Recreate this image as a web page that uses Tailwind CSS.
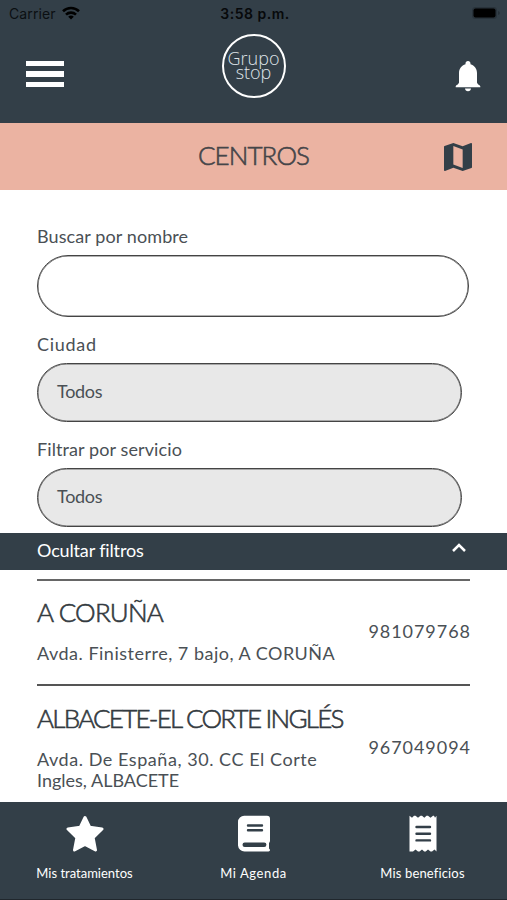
<!DOCTYPE html>
<html lang="es">
<head>
    <meta charset="UTF-8">
    <meta name="viewport" content="width=device-width, initial-scale=1.0">
    <title>Centros</title>
    <script src="https://cdn.jsdelivr.net/npm/@tailwindcss/browser@4"></script>
</head>
<body class="bg-white">
    <main class="flex flex-col h-[900px] w-[507px] overflow-hidden font-[Lato,sans-serif] text-[#4a5055] whitespace-nowrap">

        <header class="h-[123px] shrink-0 bg-[#333f48] flex flex-col">
            <!-- status bar -->
            <div class="h-7 grid grid-cols-3 items-center pl-[9px] pr-[6px] pb-px text-black font-[Inter,sans-serif] text-[14px]">
                <div class="flex items-center gap-[6px]">
                    <span class="text-[#0b0f12] tracking-[0.1px]">Carrier</span>
                    <svg class="w-[18px] h-[14px] mb-[2px]" viewBox="0 0 18 14" fill="none" stroke="#000" stroke-width="2.6">
                        <path d="M1 5.2C5.5.9 12.5.9 17 5.2" />
                        <path d="M4 8.6c2.8-2.7 7.2-2.7 10 0" />
                        <path d="M9 13.6 6.2 10.7c1.6-1.5 4-1.5 5.6 0z" fill="#000" stroke="none" />
                    </svg>
                </div>
                <span class="text-center font-semibold tracking-[0.5px] text-[#07090b]">3:58 p.m.</span>
                <svg class="w-[30px] h-[14px] justify-self-end mb-px" viewBox="0 0 30 14">
                    <rect x="1" y="1" width="25" height="12" rx="3.5" fill="#29333b" />
                    <rect x="2.5" y="2.5" width="22" height="9" rx="2" fill="#000" />
                    <path d="M27.5 5v4c1.3-.5 1.3-3.5 0-4z" fill="#1d252b" />
                </svg>
            </div>
            <div class="flex justify-between items-start pl-[26px] pr-[26px]">
                <div class="flex flex-col gap-[5px] w-[38px] mt-[33px]">
                    <span class="h-[5.3px] bg-white"></span>
                    <span class="h-[5.3px] bg-white"></span>
                    <span class="h-[5.3px] bg-white"></span>
                </div>
                <div class="w-16 h-16 ml-[-12px] mt-[6px] rounded-full border-2 border-white flex flex-col items-center justify-center text-[#dfe4e8] font-['Open_Sans',sans-serif] text-[18px] leading-[14px] pb-[3px]">
                    <span class="font-light">Grupo</span>
                    <span class="font-light">stop</span>
                </div>
                <svg class="w-[26px] h-[31px] mt-[33px]" viewBox="0 0 26 31" fill="#fff">
                    <path d="M13 0c-1.5 0-2.5 1-2.5 2.5v.8C6.500 4.5 4 8 4 12v9.500c0 1.500-3.300 3-3.300 3.700v1h24.600v-1c0-.7-3.300-2.200-3.300-3.700V12c0-4-2.500-7.500-6.500-8.700v-.8C15.500 1 14.500 0 13 0z" />
                    <path d="M10 27.500h6c0 1.500-1.300 2.700-3 2.700s-3-1.200-3-2.700z" />
                </svg>
            </div>
        </header>

        <div class="h-[67px] shrink-0 bg-[#ebb3a2] grid grid-cols-[1fr_auto_1fr] items-center">
            <h1 class="col-start-2 pb-[3px] text-[26px] leading-none tracking-[-0.9px] text-[#454549] font-light [-webkit-text-stroke:0.6px_#454549]">CENTROS</h1>
            <svg class="w-[28px] h-[28px] justify-self-end mr-[35px]" viewBox="3 3 18 18" fill="#333f48">
                <path d="M20.500 3l-.16.030L15 5.100 9 3 3.360 4.900c-.21.070-.36.250-.36.480V20.500c0 .28.220.5.500.5l.16-.03L9 18.900l6 2.100 5.640-1.900c.21-.07.36-.25.36-.48V3.500c0-.28-.22-.5-.5-.5zM15 19l-6-2.110V5l6 2.110V19z" />
            </svg>
        </div>

        <section class="h-[343px] shrink-0 pl-[37px] pt-[34px] text-[18px] leading-6">
            <label class="block tracking-[0.1px]">Buscar por nombre</label>
            <div class="mt-[7px] w-[432px] h-[62px] rounded-full border border-[#444] inset-shadow-[0_0_0_0.5px_#666]"></div>
            <label class="block mt-[15px] tracking-[0.7px]">Ciudad</label>
            <div class="mt-[7px] w-[425px] h-[59px] rounded-full border border-[#444] inset-shadow-[0_0_0_0.5px_#666] bg-[#e8e8e8] flex items-center pl-[19px] pb-[3px] tracking-[-0.3px]">Todos</div>
            <label class="block mt-[15px] tracking-[0.1px]">Filtrar por servicio</label>
            <div class="mt-[7px] w-[425px] h-[59px] rounded-full border border-[#444] inset-shadow-[0_0_0_0.5px_#666] bg-[#e8e8e8] flex items-center pl-[19px] pb-[3px] tracking-[-0.3px]">Todos</div>
        </section>

        <div class="h-[37px] shrink-0 bg-[#333f48] text-white text-[18px] flex items-center justify-between pl-[37px] pr-[41px]">
            <span class="pb-[3px] tracking-[-0.15px]">Ocultar filtros</span>
            <svg class="w-[14px] h-[9px] mb-[8px]" viewBox="0 0 14 9" fill="none" stroke="#fff" stroke-width="2.5">
                <path d="M1 8l6-6 6 6" />
            </svg>
        </div>

        <section class="h-[232px] shrink-0 px-[37px] pt-[9px]">
            <article class="h-[105px] border-t-2 border-[#666] flex justify-between">
                <div class="pt-[17px]">
                    <h2 class="text-[26px] leading-7 text-[#333a40] tracking-[-0.8px] font-light [-webkit-text-stroke:0.6px_#333a40]">A CORUÑA</h2>
                    <p class="mt-[17px] text-[18px] leading-[21px] tracking-[0.5px]">Avda. Finisterre, 7 bajo, A CORUÑA</p>
                </div>
                <span class="pt-[38px] text-[18px] leading-6 tracking-[0.95px] mr-[-0.95px]">981079768</span>
            </article>
            <article class="border-t-2 border-[#555] flex justify-between">
                <div class="pt-[18px]">
                    <h2 class="text-[26px] leading-7 text-[#333a40] tracking-[-1.75px] font-light [-webkit-text-stroke:0.6px_#333a40]">ALBACETE-EL CORTE INGLÉS</h2>
                    <p class="mt-[17px] text-[18px] leading-[21px]"><span class="tracking-[0.55px]">Avda. De España, 30. CC El Corte</span><br>Ingles, ALBACETE</p>
                </div>
                <span class="pt-[49px] text-[18px] leading-6 tracking-[0.95px] mr-[-0.95px]">967049094</span>
            </article>
        </section>

        <nav class="h-[98px] shrink-0 bg-[#333f48] text-white text-[13px] leading-4 grid grid-cols-3 pt-[13px] border-b border-[#20272d]">
            <div class="flex flex-col items-center gap-[13px]">
                <svg class="w-[38px] h-[37px]" viewBox="0 0 38 37" fill="#fff" stroke="#fff" stroke-width="3" stroke-linejoin="round">
                    <path d="M19 2.500l4.800 9.800 12.200 1.700-8.900 8.600L29.500 35l-10.500-5.500-10.500 5.500 2.400-12.400L2 14l12.200-1.700z" />
                </svg>
                <span>Mis tratamientos</span>
            </div>
            <div class="flex flex-col items-center gap-[13px]">
                <svg class="w-[32px] h-[37px]" viewBox="0 0 32 37">
                    <path d="M6.500.8h22.500a3 3 0 0 1 3 3V26c0 .8-.5 1.500-1 2v5.500c.6.4 1 .8 1 1.500s-.6 1.500-1.500 1.500H6.500a6.500 6.500 0 0 1-6.500-6V7a6.200 6.200 0 0 1 6.500-6.200z" fill="#fff" />
                    <path d="M10 10.500h14M10 15.200h14" stroke="#333f48" stroke-width="2.4" stroke-linecap="round" />
                    <path d="M6.700 29.800h19.500" stroke="#333f48" stroke-width="4.4" stroke-linecap="round" />
                </svg>
                <span class="tracking-[0.6px]">Mi Agenda</span>
            </div>
            <div class="flex flex-col items-center gap-[13px]">
                <svg class="w-[28px] h-[37px]" viewBox="0 0 28 37">
                    <path d="M.5.8 3 2.800l2-2h1.500l2.500 2 2.500-2H13l2.300 2 2.200-2H19l2.500 2 2.500-2h1L26 2.800 27.500.8v35.700L25.500 34.500l-2.500 2h-1.500l-2.500-2-2.300 2h-1.500l-2.200-2-2.500 2H9l-2.500-2-2.500 2H.5z" fill="#fff" />
                    <path d="M7.500 12h13.500M7.500 18.700h13.500M7.500 25.400h13.500" stroke="#333f48" stroke-width="2.4" stroke-linecap="round" />
                </svg>
                <span class="tracking-[0.15px]">Mis beneficios</span>
            </div>
        </nav>
    </main>
</body>
</html>
